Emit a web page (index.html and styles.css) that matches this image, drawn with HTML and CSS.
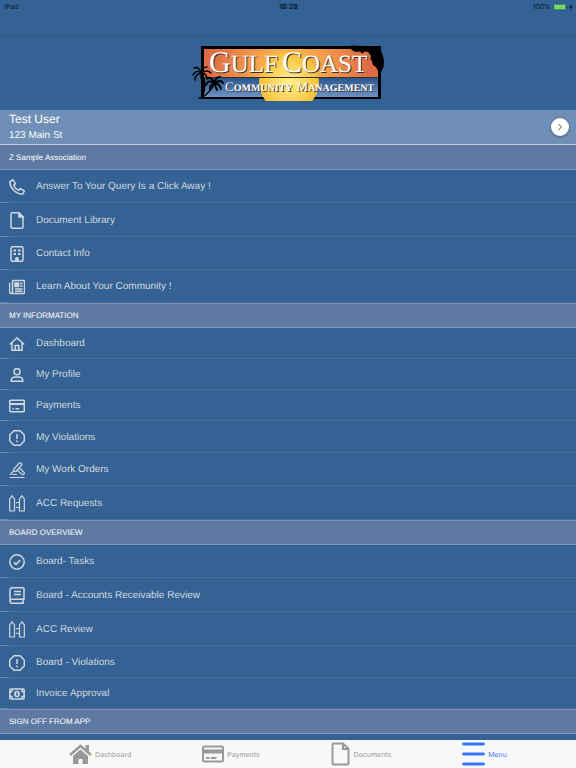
FILE: index.html
```html
<!DOCTYPE html>
<html lang="en">
<head>
    <meta charset="UTF-8">
    <meta name="viewport" content="width=device-width, initial-scale=1.0">
    <title>Gulf Coast Community Management</title>
    <link rel="stylesheet" href="styles.css">
</head>
<body>
    <header class="status-bar">
        <span>iPad</span>
        <span class="clock">18:28</span>
        <span class="battery">
            100%
            <svg width="20" height="8" viewBox="0 0 20 8">
                <rect x="0.5" y="1" width="12.5" height="6" rx="1.5" fill="#6fd868" stroke="#2c5179"/>
                <path d="M14 3v2" stroke="#1c3a5c"/>
                <path d="M18.500 1L15.800 4.500h1.700l-.5 2.500L20 3.500h-2z" fill="#0c1c30"/>
            </svg>
        </span>
    </header>

    <main class="content">
        <div class="logo">
            <svg width="216" height="73" viewBox="0 0 216 73" role="img" aria-label="Gulf Coast Community Management">
                <defs>
                    <radialGradient id="sky" gradientUnits="userSpaceOnUse" cx="109" cy="38" r="80">
                        <stop offset="0" stop-color="#ffd84c"/>
                        <stop offset="0.45" stop-color="#f5a04a"/>
                        <stop offset="1" stop-color="#dd6c46"/>
                    </radialGradient>
                    <linearGradient id="sea" x1="0" y1="0" x2="0" y2="1">
                        <stop offset="0" stop-color="#2b568e"/>
                        <stop offset="1" stop-color="#6d92c4"/>
                    </linearGradient>
                    <radialGradient id="sun">
                        <stop offset="0" stop-color="#fff08a"/>
                        <stop offset="1" stop-color="#f9bf38"/>
                    </radialGradient>
                    <clipPath id="horizon"><path d="M0 0h216v64H0z"/></clipPath>
                </defs>
                <path d="M21 9h180v53H21z"/>
                <path d="M24 12h174v28H24z" fill="url(#sky)"/>
                <path d="M24 41h174v19H24z" fill="url(#sea)"/>
                <circle cx="109" cy="45" r="30" fill="url(#sun)" clip-path="url(#horizon)"/>
                <path d="M24 40.5h174" stroke="#34302c"/>
                <!-- florida -->
                <path d="M171 8.500L184 9l3 1.500 11-.5 1-1.500 1.500 1.500.5 4 2 5 1 5-.5 6-2.500 5-3-1-2-4-3-2-1-4-1.500-2 .5-3-3-4-3.500-.5-2 2-3-2-4 .5-4-2z"/>
                <!-- palms -->
                <g fill="none" stroke="#000" stroke-linecap="round">
                    <path d="M22 36q5 11 1 23" stroke-width="1.5"/>
                    <path d="M35 46q-5 9-12 14" stroke-width="1.500"/>
                    <path d="M22 36q-6-4-9 2M22 36q-7 1-7 7M22 36q-4-7-8-5M22 36q0-6 5-6M22 36q5-4 9 0M22 36q5 1 5 6M22 36q-2 4 0 7" stroke-width="1.500"/>
                    <path d="M35 46q-7-4-9 2M35 46q-6 2-5 7M35 46q-4-6-7-5M35 46q0-6 5-6M35 46q5-4 8 0M35 46q5 1 6 6M35 46q0 4 2 7" stroke-width="2"/>
                    <path d="M19 61h8" stroke-width="1.500"/>
                </g>
                <g class="logo-shadow" transform="translate(1 1)">
                    <text x="29" y="35"><tspan class="cap">G</tspan><tspan class="low">ULF</tspan> <tspan class="cap">C</tspan><tspan class="low">OAST</tspan></text>
                    <text x="45" y="54"><tspan class="sub-cap">C</tspan><tspan class="sub-low">OMMUNITY</tspan> <tspan class="sub-cap">M</tspan><tspan class="sub-low">ANAGEMENT</tspan></text>
                </g>
                <g class="logo-text">
                    <text x="29" y="35"><tspan class="cap">G</tspan><tspan class="low">ULF</tspan> <tspan class="cap">C</tspan><tspan class="low">OAST</tspan></text>
                    <text x="45" y="54"><tspan class="sub-cap">C</tspan><tspan class="sub-low">OMMUNITY</tspan> <tspan class="sub-cap">M</tspan><tspan class="sub-low">ANAGEMENT</tspan></text>
                </g>
            </svg>
        </div>

        <section class="user">
            <div>
                <h1>Test User</h1>
                <p>123 Main St</p>
            </div>
            <button class="next" type="button" aria-label="Switch account">
                <svg width="6" height="8" viewBox="0 0 6 8"><path d="M1.500 1l3 3-3 3" fill="none" stroke="#999" stroke-width="1.200"/></svg>
            </button>
        </section>

        <h2 class="section-title">Z Sample Association</h2>
        <nav class="menu">
            <a href="#"><svg width="16" height="16" viewBox="0 0 16 16"><path d="M1 2.500L4 .8l2.500 4-1.800 1.700q1.500 3.200 4.800 4.800l1.800-1.800 4 2.500-1.600 3Q9 15.500 4.700 11.200T1 2.500z"/></svg>Answer To Your Query Is a Click Away !</a>
            <a href="#"><svg width="16" height="17" viewBox="0 0 16 17"><path d="M3.500.8H10l4 4V15q0 1.200-1.200 1.200H3.200Q2 16.200 2 15V2.300Q2 .8 3.500.8z"/><path d="M10 1v4h4z" fill="#d2d8dd"/></svg>Document Library</a>
            <a href="#"><svg width="16" height="16" viewBox="0 0 16 16"><rect x="2" y=".7" width="12" height="14.600" rx="1.500"/><path d="M4.500 4.500h2.500M9 4.500h2.500M4.500 8h2.500M9 8h2.500" stroke-width="2.200"/><path d="M6.200 15v-3.200q1.800-1.500 3.600 0V15z" fill="#d2d8dd" stroke="none"/></svg>Contact Info</a>
            <a href="#"><svg width="16" height="16" viewBox="0 0 16 16"><path d="M3.500 2.500q0-1 1-1h10q1 0 1 1v11q0 1-1 1H2q-1.500 0-1.500-1.500V3.500M3.500 2.500V13q0 1.500-1.500 1.500M6 10h7.500M6 12.200h7.500M11 4.500h2.500M11 7h2.500"/><path d="M6 4h3.500v3.500H6z" fill="#d2d8dd"/></svg>Learn About Your Community !</a>
        </nav>

        <h2 class="section-title">MY INFORMATION</h2>
        <nav class="menu">
            <a href="#"><svg width="16" height="14" viewBox="0 0 16 14"><path d="M.7 7.500L8 1l7.300 6.500M3 6v7.300h10V6M6.200 13V8.500h3.600V13"/></svg>Dashboard</a>
            <a href="#"><svg width="16" height="14" viewBox="0 0 16 14"><circle cx="8" cy="3.700" r="3"/><path d="M2.200 13.300q-.2-4.300 4.200-4.300h3.200q4.400 0 4.200 4.300z"/></svg>My Profile</a>
            <a href="#"><svg width="16" height="14" viewBox="0 0 16 14"><rect x=".7" y="1.200" width="14.600" height="11.600" rx="1.200"/><path d="M1 5h14" stroke-width="2"/><path d="M3.500 9.800H5M6.500 9.800h3.500"/></svg>Payments</a>
            <a href="#"><svg class="tall" width="16" height="16" viewBox="0 0 16 16"><path d="M5 .7h6L15.300 5v6L11 15.300H5L.7 11V5zM8 4v5M8 10.500v1.700"/></svg>My Violations</a>
            <a href="#"><svg class="thin" width="16" height="16" viewBox="0 0 16 16"><path d="M.5 15.500h15M.8 12.500h1.500M3.500 12.500h4.500M5 7L10 1.300q1-1 2.200-.1t.1 2.200L7.500 9q-1 1-2.200.1T5 7zM10.300 5.800l4.700 4.500q.8 1-.1 1.900t-1.900.1L8.200 8.200M5 8.500l-3.500 4"/></svg>My Work Orders</a>
            <a href="#"><svg class="thin" width="16" height="17" viewBox="0 0 16 17"><path d="M.7 16V4L3 .8 5.500 4v12zM10.500 16V4L13 .8 15.300 4v12zM7.500 7.500h3M7.500 12.500h3M7.500 7.500v1M7.500 11.500v1"/></svg>ACC Requests</a>
        </nav>

        <h2 class="section-title">BOARD OVERVIEW</h2>
        <nav class="menu">
            <a href="#"><svg width="16" height="16" viewBox="0 0 16 16"><circle cx="8" cy="8" r="7.200"/><path d="M4.800 8.200L7 10.400l4.300-4.400" stroke-width="1.600"/></svg>Board- Tasks</a>
            <a href="#"><svg width="16" height="17" viewBox="0 0 16 17"><path d="M3.500.8h10.700q.8 0 .8.800v10.600H3.200Q1 12.200 1 14.200V3Q1 .8 3.500.8zM1 14.200q0 2 2.200 2H15M14 12.500v3.500M5 4.500h7M5 7.500h7"/></svg>Board - Accounts Receivable Review</a>
            <a href="#"><svg class="thin" width="16" height="17" viewBox="0 0 16 17"><path d="M.7 16V4L3 .8 5.500 4v12zM10.500 16V4L13 .8 15.300 4v12zM7.500 7.500h3M7.500 12.500h3M7.500 7.500v1M7.500 11.500v1"/></svg>ACC Review</a>
            <a href="#"><svg class="tall" width="16" height="16" viewBox="0 0 16 16"><path d="M5 .7h6L15.300 5v6L11 15.300H5L.7 11V5zM8 4v5M8 10.500v1.700"/></svg>Board - Violations</a>
            <a href="#"><svg width="16" height="14" viewBox="0 0 16 14"><rect x=".8" y="2" width="14.400" height="10" rx="1"/><path d="M1 5q2 0 2.500-2.500M15 5q-2 0-2.500-2.500M1 9q2 0 2.500 2.500M15 9q-2 0-2.500 2.500"/><ellipse cx="8" cy="7" rx="2.800" ry="3.300" fill="#d2d8dd" stroke="none"/><path d="M8 5.200v3.600" stroke="#346294"/></svg>Invoice Approval</a>
        </nav>

        <h2 class="section-title">SIGN OFF FROM APP</h2>
    </main>

    <nav class="tab-bar">
        <a href="#"><svg width="23" height="22" viewBox="0 0 23 22"><path d="M1 12L11.500 3 22 12" fill="none" stroke="#999" stroke-width="2.500"/><path d="M16.500 2H20v7l-3.500-3zM4 13L11.500 6.500 19 13V21h-5.500v-5h-4v5H4z" fill="#999"/></svg>Dashboard</a>
        <a href="#"><svg width="22" height="22" viewBox="0 0 22 22"><rect x="1" y="3.500" width="20" height="15" rx="1.500" fill="none" stroke="#999" stroke-width="2"/><path d="M1 8.500h20" stroke="#999" stroke-width="4"/><path d="M4 15h3.500M9 15h5.500" stroke="#999" stroke-width="2"/></svg>Payments</a>
        <a href="#"><svg width="20" height="24" viewBox="0 0 20 24"><path d="M2.500 1.500H12L17.500 7v14.500q0 1-1 1h-14q-1 0-1-1v-19q0-1 1-1zM12 1.500V7h5.500" fill="none" stroke="#999" stroke-width="2"/></svg>Documents</a>
        <a class="active" href="#"><svg width="23" height="24" viewBox="0 0 23 24"><path d="M1.500 2h20M1.500 12h20M1.500 22h20" stroke="#3478f6" stroke-width="2.800" stroke-linecap="round"/></svg>Menu</a>
    </nav>
</body>
</html>
```

FILE: styles.css
```css
* {
    box-sizing: border-box;
}
body {
    display: flex;
    flex-direction: column;
    height: 100vh;
    margin: 0;
    background-color: #346294;
    color: #fff;
    font-family: "Liberation Sans", Arial, sans-serif;
    text-rendering: geometricPrecision;
}
h1, h2, p {
    margin: 0;
    font-weight: normal;
}
a {
    text-decoration: none;
}
svg {
    flex: none;
}

.status-bar {
    display: grid;
    grid-template-columns: 1fr auto 1fr;
    align-items: start;
    flex: none;
    height: 37px;
    padding: 2px 3px 0 4px;
    border-bottom: 1px solid #2f5a88;
    color: #0c1c30;
    font-family: Inter, sans-serif;
    font-size: 7px;
    line-height: 9px;
}
.clock {
    font-weight: bold;
}
.battery {
    display: flex;
    align-items: center;
    justify-content: flex-end;
    gap: 2px;
}

.content {
    flex: 1;
    min-height: 0;
    overflow: hidden;
}
.logo {
    display: flex;
    justify-content: center;
}
.logo text {
    font-family: "Liberation Serif", serif;
}
.logo-text {
    fill: #fff;
}
.logo-shadow {
    fill: #3d3030;
}
.cap {
    font-size: 30px;
}
.low {
    font-size: 25px;
}
.sub-cap {
    font-size: 13px;
}
.sub-low {
    font-size: 10px;
    font-weight: bold;
}

.user {
    display: flex;
    align-items: center;
    justify-content: space-between;
    padding: 1px 7px 1px 9px;
    background-color: #6f8fb6;
    border-bottom: 1px solid #c3cfde;
}
.user h1 {
    font-size: 12px;
    line-height: 17px;
}
.user p {
    font-size: 10px;
    line-height: 15px;
}
.next {
    display: flex;
    align-items: center;
    justify-content: center;
    width: 18px;
    height: 18px;
    padding: 0;
    border: none;
    border-radius: 50%;
    background-color: #fff;
    box-shadow: 0 1px 3px rgba(0, 0, 0, 0.4);
}

.section-title {
    padding: 0 9px;
    background-color: #5e7aa2;
    border-top: 1px solid #7893b5;
    border-bottom: 1px solid #7e99bb;
    font-size: 8px;
    line-height: 23px;
}
.user + .section-title {
    border-top-color: #5e7aa2;
}

.menu a {
    display: flex;
    align-items: center;
    gap: 11px;
    padding: 9px 9px 8px;
    /* separator, brighter where it meets the left edge */
    background: linear-gradient(to right, #6388b2 9px, #4a6c94 9px) bottom / 100% 1px no-repeat;
    color: #d2d8dd;
    font-size: 10px;
    line-height: 14px;
}
.menu svg {
    fill: none;
    stroke: #d2d8dd;
    stroke-width: 1.5px;
}
.menu .thin {
    stroke-width: 1.2px;
}
.menu .tall {
    margin-bottom: -1px;
}

.tab-bar {
    display: flex;
    justify-content: space-between;
    flex: none;
    height: 28px;
    padding: 0 12%;
    background-color: #f8f8f8;
}
.tab-bar a {
    display: flex;
    align-items: center;
    gap: 3px;
    color: #999;
    font-family: Inter, sans-serif;
    font-size: 7px;
}
.tab-bar .active {
    color: #3478f6;
}
```
